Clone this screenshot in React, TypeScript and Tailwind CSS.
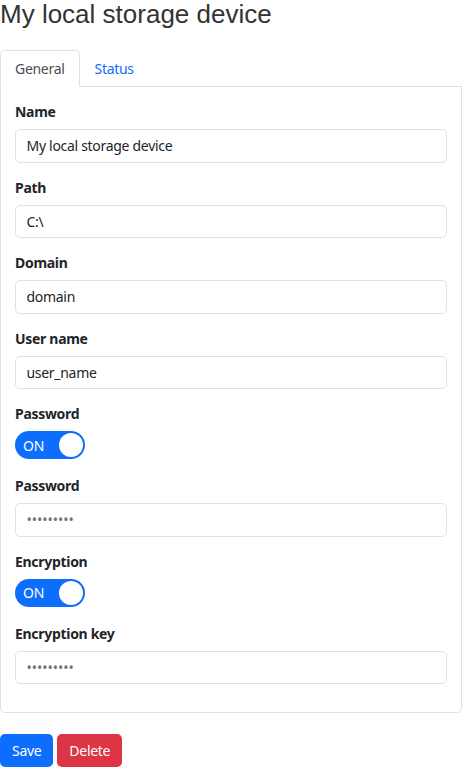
import { useState } from 'react';

const FONT = { fontFamily: '"Noto Sans", "Open Sans", sans-serif', letterSpacing: '-0.3px' };

function Field({ label, value, type = 'text' }: { label: string; value: string; type?: string }) {
  const secret = type === 'password';
  return (
    <div className="mb-[14px]">
      <label className="mb-[7px] block text-[14px] font-bold leading-[21px] text-[#212529]">{label}</label>
      <input
        type={type}
        readOnly
        value={value}
        className={
          secret
            ? 'block h-[33.5px] w-full rounded-[5px] border border-[#dee2e6] bg-white px-[10.5px] text-[14px] leading-[21px] tracking-normal text-[#6c757d] outline-none'
            : 'block h-[33.5px] w-full rounded-[5px] border border-[#dee2e6] bg-white px-[10.5px] text-[14px] leading-[21px] text-[#212529] outline-none'
        }
      />
    </div>
  );
}

function Toggle({ label }: { label: string }) {
  const [on, setOn] = useState(true);
  return (
    <div className="mb-[16px]">
      <label className="mb-[7px] block text-[14px] font-bold leading-[21px] text-[#212529]">{label}</label>
      <button
        type="button"
        onClick={() => setOn(!on)}
        className="flex h-[28px] w-[70px] items-center justify-between rounded-full bg-[#0d6efd] pl-[8px] pr-[2px] text-[14px] text-white"
      >
        <span>{on ? 'ON' : 'OFF'}</span>
        <span className="h-[24px] w-[24px] rounded-full bg-white" />
      </button>
    </div>
  );
}

export default function App() {
  return (
    <div className="w-[462px] bg-white" style={FONT}>
      <h1
        className="mb-[22px] text-[26px] leading-[28px] text-[#333]"
        style={{ fontFamily: '"Liberation Sans", Arial, sans-serif', letterSpacing: 0 }}
      >
        My local storage device
      </h1>

      <div className="flex border-b border-[#dee2e6]">
        <div className="-mb-px rounded-t-[5px] border border-[#dee2e6] border-b-white bg-white px-[14px] py-[7px] text-[14px] leading-[21px] text-[#495057]">
          General
        </div>
        <div className="-mb-px border border-transparent px-[14px] py-[7px] text-[14px] leading-[21px] text-[#0d6efd]">
          Status
        </div>
      </div>

      <div className="rounded-b-[5px] border border-t-0 border-[#dee2e6] px-[14px] pt-[14px] pb-[14px]">
        <Field label="Name" value="My local storage device" />
        <Field label="Path" value="C:\" />
        <Field label="Domain" value="domain" />
        <Field label="User name" value="user_name" />
        <Toggle label="Password" />
        <Field label="Password" value="123456789" type="password" />
        <Toggle label="Encryption" />
        <Field label="Encryption key" value="123456789" type="password" />
      </div>

      <div className="mt-[21px] flex gap-[4px]">
        <button className="h-[33px] rounded-[5px] bg-[#0d6efd] px-[12px] text-[14px] text-white">Save</button>
        <button className="h-[33px] rounded-[5px] bg-[#dc3545] px-[12px] text-[14px] text-white">Delete</button>
      </div>
    </div>
  );
}
